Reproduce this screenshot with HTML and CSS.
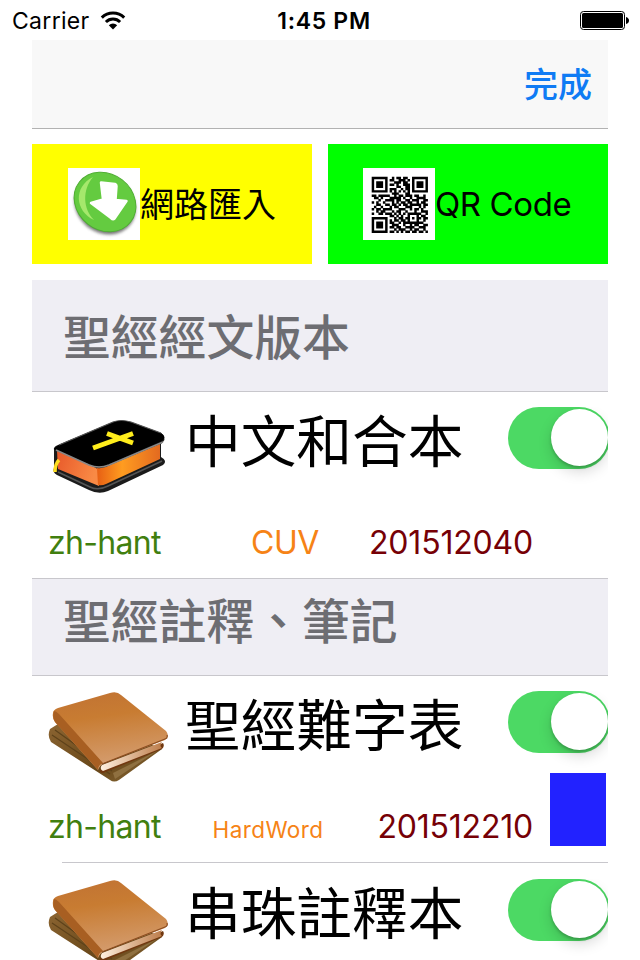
FILE: index.html
```
<!DOCTYPE html>
<html lang="zh-Hant">
<head>
    <meta charset="UTF-8">
    <meta name="viewport" content="width=device-width, initial-scale=1.0">
    <title>聖經</title>
    <link rel="stylesheet" href="styles.css">
</head>
<body>
    <svg class="defs" width="0" height="0">
        <defs>
            <linearGradient id="cover" x1="0.4" y1="0" x2="0.6" y2="1">
                <stop offset="0" stop-color="#c27433"/>
                <stop offset="0.3" stop-color="#c87c32"/>
                <stop offset="1" stop-color="#d6a177"/>
            </linearGradient>
            <linearGradient id="under" x1="0" y1="0" x2="1" y2="1">
                <stop offset="0" stop-color="#8c6532"/>
                <stop offset="0.6" stop-color="#684719"/>
                <stop offset="1" stop-color="#8c6d3b"/>
            </linearGradient>
            <linearGradient id="paper" x1="0" y1="0" x2="1" y2="0">
                <stop offset="0" stop-color="#fff0df"/>
                <stop offset="1" stop-color="#bd7d4b"/>
            </linearGradient>
            <linearGradient id="edgeLeft" x1="0" y1="0" x2="1" y2="0.3">
                <stop offset="0" stop-color="#e8592a"/>
                <stop offset="1" stop-color="#f98a45"/>
            </linearGradient>
            <linearGradient id="edgeRight" x1="0" y1="0" x2="1" y2="0">
                <stop offset="0" stop-color="#e75f14"/>
                <stop offset="0.4" stop-color="#ff9c20"/>
                <stop offset="1" stop-color="#e36a20"/>
            </linearGradient>
            <filter id="soft" x="-20%" y="-20%" width="140%" height="140%">
                <feGaussianBlur stdDeviation="1.4"/>
            </filter>
            <symbol id="books" viewBox="0 0 150 110">
                <path d="M10 49 Q7 56 11 62 L70 100 Q74 103 79 100 L122 69 L60 44 L18 44 Z" fill="url(#under)"/>
                <path d="M12 55 L70 94 M15 50 L72 91" stroke="#5e421a" stroke-width="1.2" fill="none"/>
                <path d="M73 93 L117 71 L75 99 Z" fill="#8f7040"/>
                <path d="M61 90 L123 63 Q125 66 122 69 L63 93 Q59 93 60 89 Z" fill="#71370f"/>
                <path d="M62 85 L122 62 Q119 66 122 68 L63 91 Q59 89 62 85 Z" fill="url(#paper)"/>
                <path d="M13 33 Q13 30 18 28 L70 13 Q77 11 81 15 L126 51 Q130 56 125 60 L64 83 Q60 85 58 90 L15 42 Q12 38 13 33 Z" fill="url(#cover)"/>
                <path d="M14 31 Q12 38 15 42 L58 90 Q58 85 63 83 L19 34 Q16 31 14 31 Z" fill="#a85f22"/>
                <path d="M62 84 L125 59 Q128 58 127 55" stroke="#8c4d20" stroke-width="1.2" fill="none"/>
            </symbol>
        </defs>
    </svg>

    <div class="status-bar">
        <div class="carrier">
            <span>Carrier</span>
            <svg class="wifi" width="26" height="20" viewBox="0 0 26 20">
                <path d="M1.8 6.6 A16 16 0 0 1 24.2 6.6" fill="none" stroke="#000" stroke-width="3"/>
                <path d="M5.9 11 A10 10 0 0 1 20.1 11" fill="none" stroke="#000" stroke-width="3"/>
                <path d="M8.8 14.2 A6.2 6.2 0 0 1 17.2 14.2 L13 18.6 Z"/>
            </svg>
        </div>
        <div class="time">1:45 PM</div>
        <svg class="battery" width="50" height="20" viewBox="0 0 50 20">
            <rect x="0.5" y="0.5" width="44" height="18" rx="3" fill="#fff" stroke="#000"/>
            <rect x="2" y="2" width="41" height="15" rx="1.5"/>
            <path d="M46 6 Q49 7 49 9.5 Q49 12 46 13 Z"/>
        </svg>
    </div>

    <div class="content">
        <div class="nav-bar">
            <a class="done">完成</a>
        </div>

        <div class="actions">
            <div class="action action-import">
                <svg class="action-icon" width="72" height="72" viewBox="0 0 72 72">
                    <rect width="72" height="72" fill="#fff"/>
                    <ellipse cx="37" cy="37" rx="32" ry="28" transform="rotate(38 37 37)" fill="#777" filter="url(#soft)"/>
                    <ellipse cx="37" cy="34" rx="32.5" ry="28" transform="rotate(38 37 34)" fill="#64cb40" stroke="#4fae32" stroke-width="1"/>
                    <path d="M25 9 C5 19 7 43 26 52 C15 41 14 22 25 9 Z" fill="#a5e86c"/>
                    <path d="M33 14.5 L47 16 Q48.500 16.500 48.500 18 L47.500 32 L58.500 33 L46.500 50.500 Q45 52 43 50 L23 35 L35 31.500 Z" fill="#fff" stroke="#fff" stroke-width="2.5" stroke-linejoin="round"/>
                </svg>
                <span>網路匯入</span>
            </div>
            <div class="action action-qr">
                <svg class="action-icon" width="72" height="72" viewBox="0 0 72 72">
                    <rect width="72" height="72" fill="#fff"/>
                    <path id="qr" transform="translate(8.7 8.7) scale(2.24)"/>
                </svg>
                <span>QR Code</span>
            </div>
        </div>

        <div class="section-title first">聖經經文版本</div>

        <div class="row bible">
            <div class="row-top">
                <svg class="book" width="150" height="110" viewBox="0 0 150 110">
                    <path d="M14 50 Q13 47 18 45 L73 22 Q81 19 91 22 L121 33 Q127 37 123 42 L121 44 L121 57 Q128 61 123 65 L68 91 Q59 95 49 90 L17 75 Q12 72 14 68 Z" fill="#1b1b1b"/>
                    <path d="M18 72 L50 87 Q58 91 68 86 L122 61" fill="none" stroke="#555" stroke-width="1.5"/>
                    <path d="M17 51 L50 65 Q56 68 58 69 L59 86 L18 69 Z" fill="url(#edgeLeft)"/>
                    <path d="M57 68 Q64 69 70 65 L120 44 L120 59 L66 84 Q62 86 58 85 Z" fill="url(#edgeRight)"/>
                    <path d="M14 49 Q15 47 19 45 L73 22 Q81 19 91 22 L121 33 Q127 37 122 41 L69 64 Q59 69 49 64 Z" fill="#000"/>
                    <path d="M16 50 L49 65 Q59 69 69 65 L123 42" fill="none" stroke="#888" stroke-width="1.6"/>
                    <path d="M19 45 L73 22 Q81 19 91 22 L121 33" fill="none" stroke="#555" stroke-width="1.2"/>
                    <path d="M53 48 L93 33.500 M67 33.500 L93 43" stroke="#ffed1c" stroke-width="5" fill="none"/>
                    <path d="M19 60 Q15 64 15 72" stroke="#ffdf20" stroke-width="3.5" fill="none"/>
                </svg>
                <div class="name">中文和合本</div>
                <div class="switch"><div class="knob"></div></div>
            </div>
            <div class="row-info">
                <span class="lang">zh-hant</span>
                <span class="code">CUV</span>
                <span class="version">201512040</span>
            </div>
        </div>

        <div class="section-title">聖經註釋、筆記</div>

        <div class="row">
            <div class="row-top">
                <svg class="book" width="150" height="110"><use href="#books"/></svg>
                <div class="name">聖經難字表</div>
                <div class="switch"><div class="knob"></div></div>
            </div>
            <div class="row-info">
                <span class="lang">zh-hant</span>
                <span class="code small">HardWord</span>
                <span class="version">201512210</span>
            </div>
            <div class="blue-box"></div>
        </div>

        <div class="row separated">
            <div class="row-top">
                <svg class="book" width="150" height="110"><use href="#books"/></svg>
                <div class="name">串珠註釋本</div>
                <div class="switch"><div class="knob"></div></div>
            </div>
        </div>
    </div>

    <script>
        // QR modules, one string per line of the code
        const rows = [
            '1111111001011011001111111',
            '1000001011001110101000001',
            '1011101000111011001011101',
            '1011101011010011101011101',
            '1011101000011001101011101',
            '1000001011100101101000001',
            '1111111010101010101111111',
            '0000000001110001100000000',
            '1101111100101101110110010',
            '0110100011111010010011110',
            '0001001111011001101110011',
            '1010010001010110110010110',
            '0011001101101011011111011',
            '0100100010110001110001010',
            '1011011110001110010110100',
            '0010110001011001000100111',
            '1001101110101010111111001',
            '0000000011010100100010110',
            '1111111000101101101011011',
            '1000001010110110100010010',
            '1011101011001011111111100',
            '1011101001110010010110011',
            '1011101011011001111001110',
            '1000001000101110010110010',
            '1111111011010101101101101'
        ];
        let d = '';
        rows.forEach((row, y) => {
            [...row].forEach((cell, x) => {
                if (cell === '1') d += `M${x} ${y}h1.1v1.1h-1.1z`;
            });
        });
        document.getElementById('qr').setAttribute('d', d);
    </script>
</body>
</html>
```
FILE: styles.css
```
* {
    margin: 0;
    padding: 0;
    box-sizing: border-box;
}

body {
    width: 640px;
    height: 960px;
    overflow: hidden;
    background: #fff;
    color: #000;
    font-family: 'Inter', 'Noto Sans CJK TC', sans-serif;
    white-space: nowrap;
}

.defs {
    position: absolute;
}

.status-bar {
    display: grid;
    grid-template-columns: 1fr auto 1fr;
    align-items: center;
    height: 40px;
    padding: 1px 10px 0 12px;
    font-size: 23px;
}

.carrier {
    display: flex;
    align-items: center;
    gap: 10px;
    letter-spacing: 0.3px;
}

.time {
    padding-left: 6px;
    font-weight: 600;
    letter-spacing: 0.7px;
}

.battery {
    justify-self: end;
}

.content {
    width: 576px;
    margin: 0 auto;
}

.nav-bar {
    display: flex;
    justify-content: flex-end;
    align-items: center;
    height: 89px;
    padding: 0 16px 4px 0;
    background: #f8f8f8;
    border-bottom: 1px solid #b2b2b2;
}

.done {
    color: #0f7bf4;
    font-size: 34px;
    font-weight: 500;
}

.actions {
    display: grid;
    grid-template-columns: 1fr 1fr;
    gap: 16px;
    padding: 15px 0 16px;
}

.action {
    display: flex;
    align-items: center;
    height: 120px;
    padding-left: 36px;
    font-size: 34px;
}

.action-import {
    background: #ff0;
}

.action-import span {
    padding-bottom: 3px;
}

.action-qr {
    padding-left: 35px;
    background: #0f0;
    font-size: 33px;
    letter-spacing: -0.4px;
}

.section-title {
    height: 98px;
    padding-left: 31px;
    background: #efeef4;
    border-top: 1px solid #c8c7cc;
    border-bottom: 1px solid #c8c7cc;
    color: #6d6d72;
    font-size: 47.8px;
    font-weight: 500;
    line-height: 86px;
}

.section-title.first {
    height: 112px;
    border-top: none;
    line-height: 116px;
}

.row {
    position: relative;
    height: 186px;
}

.row-top {
    display: flex;
    height: 126px;
}

.book {
    flex: none;
    margin: 4px 0 0 8px;
}

.bible .book {
    margin-top: 8px;
}

.row-top .name {
    width: 280px;
    margin-left: -5px;
    font-size: 55.7px;
    line-height: 99px;
}

.switch {
    width: 100px;
    height: 90px;
    margin: 15px 0 0 43px;
    overflow: hidden;
}

.switch::before {
    content: '';
    display: block;
    width: 102px;
    height: 62px;
    border-radius: 31px;
    background: #4cd964;
}

.knob {
    width: 57px;
    height: 57px;
    margin: -60px 0 0 43px;
    border-radius: 50%;
    background: #fff;
    box-shadow: 0 6px 14px rgba(0, 0, 0, 0.15), 0 2px 3px rgba(0, 0, 0, 0.2);
}

.row-info {
    display: grid;
    grid-template-columns: 146px 182px 157px;
    align-items: baseline;
    padding-left: 16px;
    font-size: 32px;
    line-height: 50px;
}

.lang {
    color: #417f0f;
    letter-spacing: -0.7px;
}

.code {
    color: #f68316;
    text-align: center;
    letter-spacing: -0.5px;
}

.code.small {
    padding-right: 34px;
    font-size: 22.5px;
    letter-spacing: 0.4px;
}

.version {
    display: flex;
    justify-content: flex-end;
    color: #760006;
    letter-spacing: -0.2px;
}

.blue-box {
    position: absolute;
    top: 97px;
    right: 2px;
    width: 56px;
    height: 73px;
    background: #2222ff;
}

.row.separated {
    height: 98px;
}

.row.separated::before {
    content: '';
    display: block;
    height: 1px;
    margin: 0 0 1px 30px;
    background: #c8c7cc;
}
```
